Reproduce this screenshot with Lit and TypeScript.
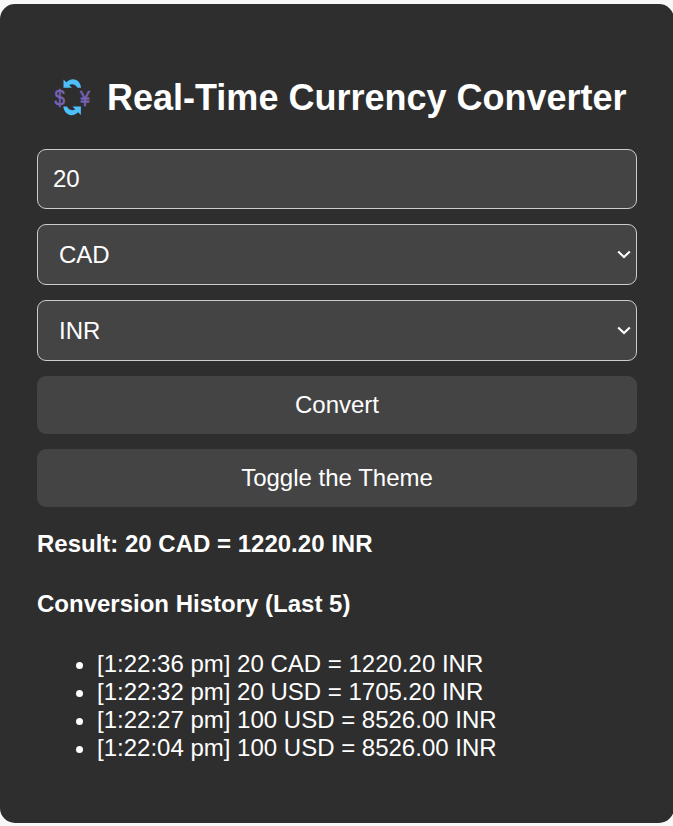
import { LitElement, html, css } from "lit";
import { customElement, state } from "lit/decorators.js";

const chevron = html`<svg class="chevron" viewBox="0 0 14 9" width="14" height="9">
  <path d="M1.2 1.4 7 7.1l5.8-5.7" fill="none" stroke="#fff" stroke-width="2.1" />
</svg>`;

const exchangeIcon = html`<svg class="logo" viewBox="0 0 40 40" width="40" height="40">
  <g fill="#7763b3" stroke="#7763b3" stroke-width=".6" font-family="Liberation Sans, Arial, sans-serif" font-weight="normal">
    <text x="2.6" y="27.6" font-size="22" textLength="10.5" lengthAdjust="spacingAndGlyphs">$</text>
    <text x="28" y="28.6" font-size="22" textLength="10" lengthAdjust="spacingAndGlyphs">¥</text>
  </g>
  <g fill="#4dbffa">
    <path d="M11.5 2.4v8.4h8.4l-2.800-2.800c3.300-1.700 6.700-.6 8.300 2.800h3.700C28.300 3 20.500-.9 14.300 5.200Z" />
    <path d="M28.900 38v-8.400h-8.400l2.800 2.800c-3.300 1.700-6.700.6-8.300-2.800H11.300C12.100 37.400 19.900 41.300 26.100 35.200Z" />
  </g>
</svg>`;

@customElement("app-root")
export class AppRoot extends LitElement {
  @state() private history = [
    "[1:22:36 pm] 20 CAD = 1220.20 INR",
    "[1:22:32 pm] 20 USD = 1705.20 INR",
    "[1:22:27 pm] 100 USD = 8526.00 INR",
    "[1:22:04 pm] 100 USD = 8526.00 INR",
  ];

  static styles = css`
    :host {
      display: block;
      box-sizing: border-box;
      height: 826px;
      padding-top: 4px;
      overflow: hidden;
      background: #f8f8f8;
      color: #fff;
      font: 24px/28px "Liberation Sans", Arial, sans-serif;
    }
    .card {
      box-sizing: border-box;
      width: 674px;
      height: 819px;
      padding: 71px 37px 0;
      border-radius: 15px;
      background: #2e2e2e;
    }
    .title {
      display: flex;
      align-items: center;
      height: 46px;
      margin: 0 0 28px;
      padding-left: 15px;
      font-size: 36px;
      line-height: 46px;
      white-space: nowrap;
    }
    .logo {
      flex: none;
      margin: -2px 15px 0 0;
    }
    .form {
      display: grid;
      gap: 15px;
    }
    .field,
    .button {
      box-sizing: border-box;
      width: 100%;
      margin: 0;
      border: 1px solid #ccc;
      border-radius: 9px;
      background: #444;
      color: #fff;
      font: inherit;
      outline: none;
    }
    .field {
      height: 60px;
      padding: 0 15px;
    }
    .select {
      display: flex;
      align-items: center;
      justify-content: space-between;
      height: 61px;
      padding: 0 5px 0 21px;
    }
    .button {
      height: 58px;
      border: 0;
    }
    .heading {
      margin: 0;
      font-size: 24px;
      line-height: 28px;
    }
    .result {
      margin: 23px 0 32px;
    }
    .history {
      margin: 32px 0 0;
      padding-left: 60px;
    }
  `;

  render() {
    return html`<main class="card">
      <h1 class="title">${exchangeIcon}<span>Real-Time Currency Converter</span></h1>
      <div class="form">
        <input class="field" .value=${"20"} />
        <div class="field select" role="combobox"><span>CAD</span>${chevron}</div>
        <div class="field select" role="combobox"><span>INR</span>${chevron}</div>
        <button class="button">Convert</button>
        <button class="button">Toggle the Theme</button>
      </div>
      <h4 class="heading result">Result: 20 CAD = 1220.20 INR</h4>
      <h4 class="heading">Conversion History (Last 5)</h4>
      <ul class="history">
        ${this.history.map((entry) => html`<li>${entry}</li>`)}
      </ul>
    </main>`;
  }
}
